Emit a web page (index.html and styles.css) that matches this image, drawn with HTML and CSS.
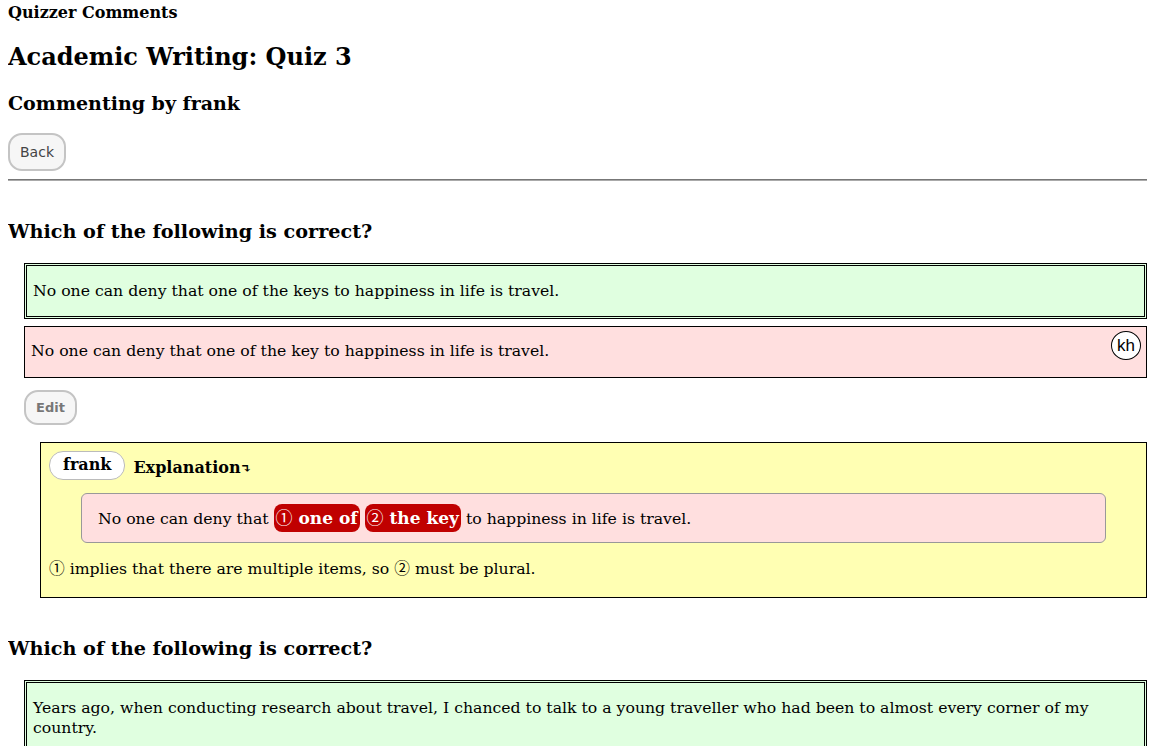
FILE: index.html
```html
<!DOCTYPE html>
<html>
<head>
<meta charset="utf-8">
<link rel="stylesheet" href="styles.css">
</head>
<body>
<div class="app-title">Quizzer Comments</div>
<h1 class="quiz-title">Academic Writing: Quiz 3</h1>
<h2 class="sub-title">Commenting by frank</h2>
<button class="btn back-btn">Back</button>
<hr class="divider">

<section class="question">
  <h3 class="q-title">Which of the following is correct?</h3>
  <div class="choices">
    <div class="choice correct">No one can deny that one of the keys to happiness in life is travel.</div>
    <div class="choice wrong">No one can deny that one of the key to happiness in life is travel.<span class="badge">kh</span></div>
    <button class="btn edit-btn">Edit</button>
    <div class="explain">
      <div class="explain-head"><span class="author">frank</span><span class="explain-label">Explanation<span class="arrow">↴</span></span></div>
      <div class="marked">No one can deny that <span class="mark"><span class="num">①</span> one of</span> <span class="mark"><span class="num">②</span> the key</span> to happiness in life is travel.</div>
      <div class="note"><span class="num">①</span> implies that there are multiple items, so <span class="num">②</span> must be plural.</div>
    </div>
  </div>
</section>

<section class="question">
  <h3 class="q-title">Which of the following is correct?</h3>
  <div class="choices">
    <div class="choice correct">Years ago, when conducting research about travel, I chanced to talk to a young traveller who had been to almost every corner of my country.</div>
  </div>
</section>
</body>
</html>
```
FILE: styles.css
```css
body {
  margin: 3px 8px 8px;
  font-family: "DejaVu Serif", serif;
  font-size: 15.7px;
  color: #000;
  background: #fff;
}
.app-title {
  font-family: "DejaVu Serif", serif;
  font-weight: bold;
  font-size: 16px;
  line-height: 20px;
  margin: 0;
}
.quiz-title {
  font-family: "DejaVu Serif", serif;
  font-size: 24px;
  margin: 19px 0 0;
  line-height: 30px;
}
.sub-title {
  font-family: "DejaVu Serif", serif;
  font-size: 19px;
  margin: 19px 0 0;
  line-height: 24px;
}
.btn {
  font-family: "DejaVu Sans", sans-serif;
  background: #f6f6f6;
  border: 2px solid #c4c4c4;
  border-radius: 14px;
  color: #444;
}
.back-btn {
  display: block;
  margin-top: 18px;
  height: 38px;
  padding: 0 10px;
  font-size: 14px;
}
.divider {
  margin: 8px 0 0;
  border: 0;
  border-top: 1px solid #777;
  border-bottom: 1px solid #aaa;
}
.q-title {
  font-family: "DejaVu Serif", serif;
  font-size: 19.2px;
  margin: 39px 0 0;
  line-height: 24px;
}
.choices {
  margin: 19px 0 0 16px;
}
.choice {
  position: relative;
  line-height: 20px;
}
.choice.correct {
  background: #e0ffe0;
  border: 3px double #000;
  padding: 15px 6px 15px 6px;
}
.choice.wrong {
  background: #ffdfdf;
  border: 1px solid #000;
  margin-top: 7px;
  padding: 14px 6px 16px 6px;
}
.badge {
  position: absolute;
  right: 5px;
  top: 4px;
  width: 28px;
  height: 27px;
  border: 1px solid #000;
  border-radius: 50%;
  background: #fff;
  font-family: "Liberation Sans", sans-serif;
  font-size: 17px;
  line-height: 27px;
  text-align: center;
}
.edit-btn {
  display: block;
  margin-top: 12px;
  height: 35px;
  padding: 0 10px;
  font-size: 13px;
  font-weight: bold;
  color: #777;
}
.explain {
  margin: 17px 0 0 16px;
  background: #ffffb3;
  border: 1px solid #000;
  padding: 8px 8px 18px 8px;
}
.explain-head {
  display: flex;
  align-items: center;
  gap: 8px;
}
.author {
  font-weight: bold;
  font-family: "DejaVu Serif", serif;
  background: #fff;
  border: 1px solid #bbb;
  border-radius: 14px;
  padding: 3px 13px 5px;
  font-size: 16px;
}
.explain-label {
  font-family: "DejaVu Serif", serif;
  font-weight: bold;
  font-size: 16px;
  margin-top: 4px;
}
.arrow { font-size: 13px; }
.marked {
  margin: 13px 32px 0 32px;
  background: #ffdfdf;
  border: 1px solid #999;
  border-radius: 6px;
  padding: 13px 16px;
  line-height: 20px;
}
.num {
  font-family: "Noto Sans CJK JP", sans-serif;
  font-weight: normal;
}
.mark {
  background: #c00000;
  color: #fff;
  font-family: "DejaVu Serif", serif;
  font-weight: bold;
  font-size: 17px;
  border-radius: 8px;
  padding: 4px 2px;
}
.note {
  margin-top: 15px;
  line-height: 20px;
}
```
